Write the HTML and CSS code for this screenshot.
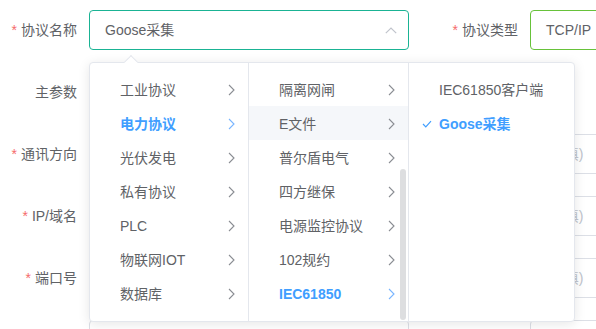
FILE: index.html
```html
<!DOCTYPE html>
<html lang="zh">
<head>
<meta charset="utf-8">
<link rel="stylesheet" href="styles.css">
</head>
<body>
<div class="form">
  <div class="row">
    <label class="lbl"><i class="req">*</i>协议名称</label>
    <div class="input focus">
      <span class="val">Goose采集</span>
      <svg class="caret" width="12" height="7" viewBox="0 0 12 7"><polyline points="0.8,6.2 6,1 11.2,6.2" fill="none" stroke="#c0c4cc" stroke-width="1.2"/></svg>
    </div>
    <label class="lbl lbl2"><i class="req">*</i>协议类型</label>
    <div class="input ok"><span class="val">TCP/IP</span></div>
  </div>
  <div class="row">
    <label class="lbl">主参数</label>
  </div>
  <div class="row">
    <label class="lbl"><i class="req">*</i>通讯方向</label>
    <div class="input"></div>
    <span class="lbl lbl2"></span>
    <div class="input"><span class="ph">(必填)</span></div>
  </div>
  <div class="row">
    <label class="lbl"><i class="req">*</i>IP/域名</label>
    <div class="input"></div>
    <span class="lbl lbl2"></span>
    <div class="input"><span class="ph">(必填)</span></div>
  </div>
  <div class="row">
    <label class="lbl"><i class="req">*</i>端口号</label>
    <div class="input"></div>
    <span class="lbl lbl2"></span>
    <div class="input"><span class="ph">(必填)</span></div>
  </div>
  <div class="row">
    <span class="lbl"></span>
    <div class="input"></div>
    <span class="lbl lbl2"></span>
    <div class="input"></div>
  </div>
</div>

<div class="popper">
  <span class="pop-arrow"></span>
  <div class="menu">
    <div class="item"><span>工业协议</span><svg class="chev" width="7" height="12" viewBox="0 0 7 12"><polyline points="1,1 6,6 1,11" fill="none" stroke="currentColor" stroke-width="1.1"/></svg></div>
    <div class="item active"><span>电力协议</span><svg class="chev" width="7" height="12" viewBox="0 0 7 12"><polyline points="1,1 6,6 1,11" fill="none" stroke="currentColor" stroke-width="1.1"/></svg></div>
    <div class="item"><span>光伏发电</span><svg class="chev" width="7" height="12" viewBox="0 0 7 12"><polyline points="1,1 6,6 1,11" fill="none" stroke="currentColor" stroke-width="1.1"/></svg></div>
    <div class="item"><span>私有协议</span><svg class="chev" width="7" height="12" viewBox="0 0 7 12"><polyline points="1,1 6,6 1,11" fill="none" stroke="currentColor" stroke-width="1.1"/></svg></div>
    <div class="item"><span>PLC</span><svg class="chev" width="7" height="12" viewBox="0 0 7 12"><polyline points="1,1 6,6 1,11" fill="none" stroke="currentColor" stroke-width="1.1"/></svg></div>
    <div class="item"><span>物联网IOT</span><svg class="chev" width="7" height="12" viewBox="0 0 7 12"><polyline points="1,1 6,6 1,11" fill="none" stroke="currentColor" stroke-width="1.1"/></svg></div>
    <div class="item"><span>数据库</span><svg class="chev" width="7" height="12" viewBox="0 0 7 12"><polyline points="1,1 6,6 1,11" fill="none" stroke="currentColor" stroke-width="1.1"/></svg></div>
  </div>
  <div class="menu">
    <div class="item"><span>隔离网闸</span><svg class="chev" width="7" height="12" viewBox="0 0 7 12"><polyline points="1,1 6,6 1,11" fill="none" stroke="currentColor" stroke-width="1.1"/></svg></div>
    <div class="item hover"><span>E文件</span><svg class="chev" width="7" height="12" viewBox="0 0 7 12"><polyline points="1,1 6,6 1,11" fill="none" stroke="currentColor" stroke-width="1.1"/></svg></div>
    <div class="item"><span>普尔盾电气</span><svg class="chev" width="7" height="12" viewBox="0 0 7 12"><polyline points="1,1 6,6 1,11" fill="none" stroke="currentColor" stroke-width="1.1"/></svg></div>
    <div class="item"><span>四方继保</span><svg class="chev" width="7" height="12" viewBox="0 0 7 12"><polyline points="1,1 6,6 1,11" fill="none" stroke="currentColor" stroke-width="1.1"/></svg></div>
    <div class="item"><span>电源监控协议</span><svg class="chev" width="7" height="12" viewBox="0 0 7 12"><polyline points="1,1 6,6 1,11" fill="none" stroke="currentColor" stroke-width="1.1"/></svg></div>
    <div class="item"><span>102规约</span><svg class="chev" width="7" height="12" viewBox="0 0 7 12"><polyline points="1,1 6,6 1,11" fill="none" stroke="currentColor" stroke-width="1.1"/></svg></div>
    <div class="item active"><span>IEC61850</span><svg class="chev" width="7" height="12" viewBox="0 0 7 12"><polyline points="1,1 6,6 1,11" fill="none" stroke="currentColor" stroke-width="1.1"/></svg></div>
    <span class="thumb"></span>
  </div>
  <div class="menu last">
    <div class="item"><span>IEC61850客户端</span></div>
    <div class="item active"><svg class="check" width="10" height="8" viewBox="0 0 10 8"><polyline points="1,4 3.8,6.8 9,1.2" fill="none" stroke="currentColor" stroke-width="1.2"/></svg><span>Goose采集</span></div>
  </div>
</div>
</body>
</html>
```

FILE: styles.css
```css
* { box-sizing: border-box; }
html, body {
  margin: 0;
  padding: 0;
  background: #fff;
  width: 596px;
  height: 329px;
  overflow: hidden;
}
body {
  font-family: "Liberation Sans", "Noto Sans CJK SC", sans-serif;
  font-size: 14px;
  color: #606266;
  position: relative;
}
.form {
  padding-top: 10px;
  display: flex;
  flex-direction: column;
  gap: 22px;
}
.row {
  display: flex;
  height: 40px;
  align-items: stretch;
  flex: none;
}
.lbl {
  flex: none;
  width: 89px;
  padding-right: 12px;
  text-align: right;
  line-height: 40px;
  white-space: nowrap;
}
.lbl2 { width: 121px; }
.req {
  font-style: normal;
  color: #f56c6c;
  margin-right: 4px;
}
.input {
  flex: none;
  width: 320px;
  height: 40px;
  border: 1px solid #dcdfe6;
  border-radius: 4px;
  padding: 0 15px;
  line-height: 38px;
  display: flex;
  align-items: center;
  justify-content: space-between;
  white-space: nowrap;
}
.input.focus { border-color: #1ab394; }
.input.ok { border-color: #67c23a; }
.val { color: #606266; }
.ph { color: #c0c4cc; }
.caret { margin-right: -4px; }

.popper {
  position: absolute;
  left: 89px;
  top: 62px;
  width: 486px;
  height: 260px;
  background: #fff;
  border: 1px solid #e4e7ed;
  border-radius: 4px;
  box-shadow: 0 2px 12px 0 rgba(0, 0, 0, 0.1);
  display: flex;
}
.pop-arrow {
  position: absolute;
  top: -6px;
  left: 36px;
  width: 10px;
  height: 10px;
  background: #fff;
  border-top: 1px solid #e4e7ed;
  border-left: 1px solid #e4e7ed;
  transform: rotate(45deg);
}
.menu {
  position: relative;
  flex: none;
  width: 160px;
  height: 100%;
  border-right: 1px solid #e4e7ed;
  padding-top: 9px;
}
.menu:first-of-type { width: 159px; }
.menu.last {
  flex: 1;
  border-right: none;
}
.item {
  height: 34px;
  line-height: 32px;
  padding: 2px 13px 0 30px;
  display: flex;
  align-items: center;
  justify-content: space-between;
  white-space: nowrap;
  color: #606266;
}
.item .chev { color: #8a8d93; flex: none; }
.item.hover { background: #f5f7fa; }
.item.active { color: #409eff; font-weight: bold; }
.item.active .chev { color: #79b5ff; }
.menu.last .item { justify-content: flex-start; position: relative; }
.check {
  position: absolute;
  left: 13px;
  top: 14px;
  color: #409eff;
}
.thumb {
  position: absolute;
  right: 2px;
  top: 106px;
  width: 6px;
  height: 151px;
  border-radius: 3px;
  background: rgba(144, 147, 153, 0.3);
}
```
